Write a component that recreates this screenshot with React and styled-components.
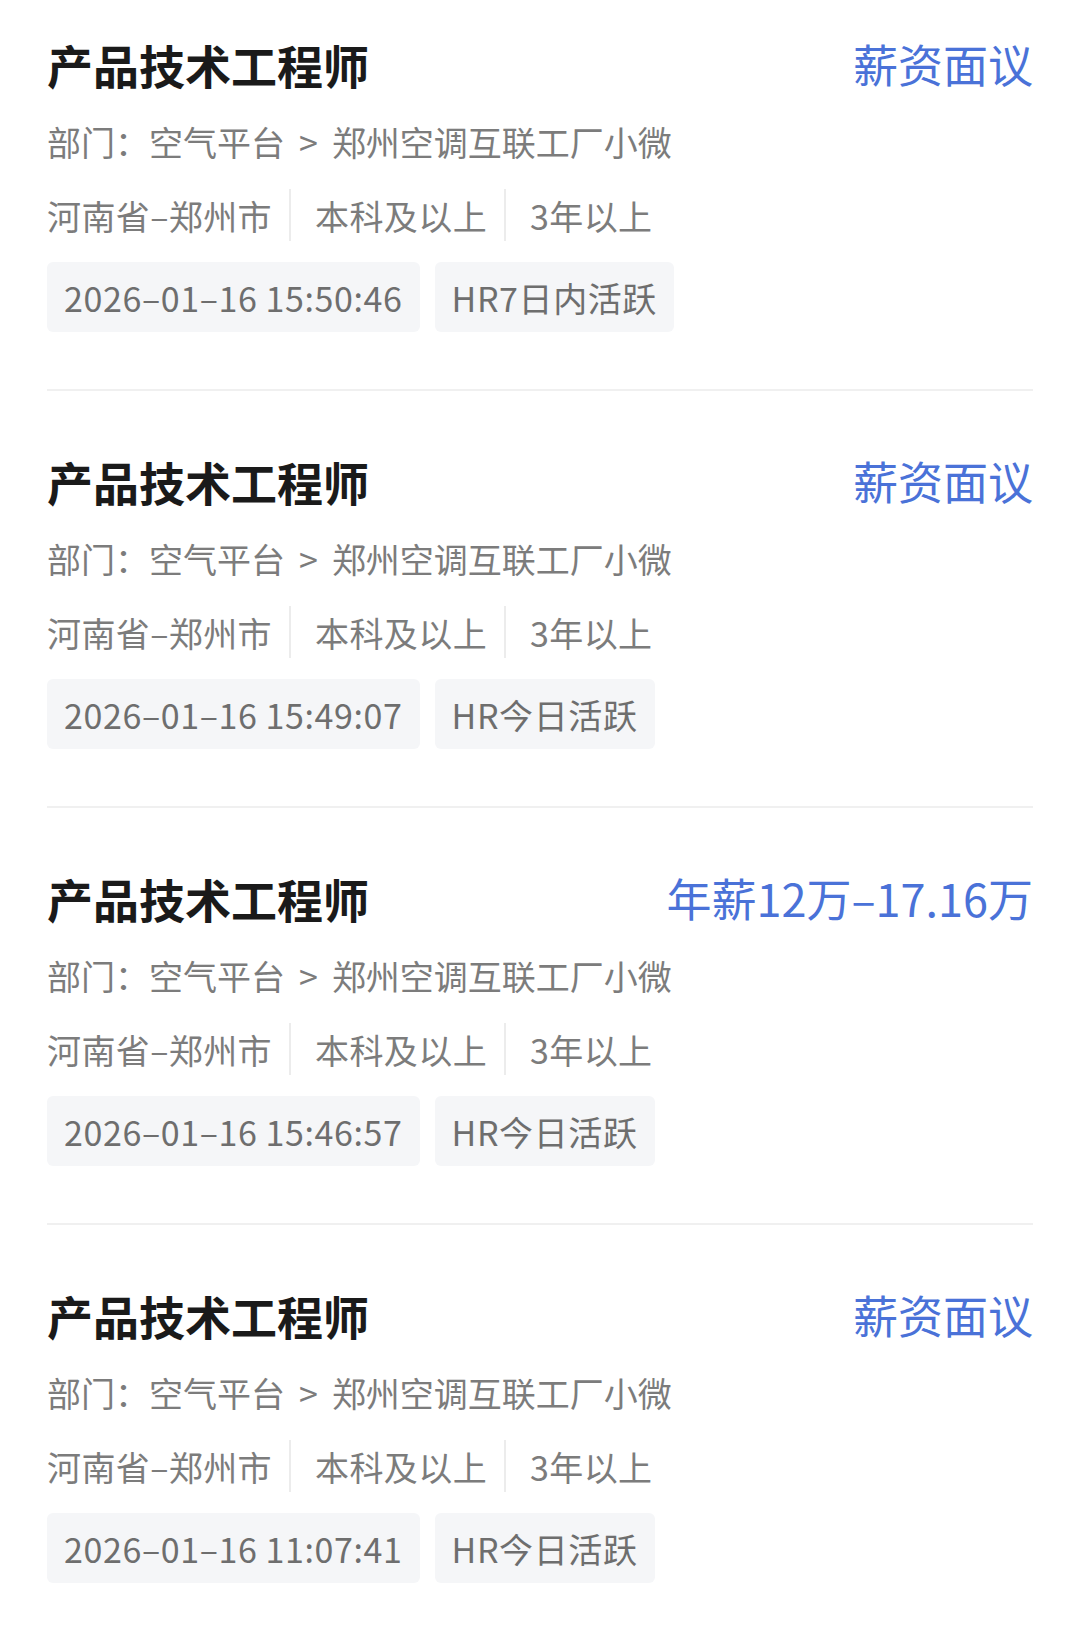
import React from 'react';
import styled, { createGlobalStyle } from 'styled-components';

const jobs = [
  { title: '产品技术工程师', salary: '薪资面议', time: '2026–01–16 15:50:46', active: 'HR7日内活跃' },
  { title: '产品技术工程师', salary: '薪资面议', time: '2026–01–16 15:49:07', active: 'HR今日活跃' },
  { title: '产品技术工程师', salary: '年薪12万–17.16万', time: '2026–01–16 15:46:57', active: 'HR今日活跃' },
  { title: '产品技术工程师', salary: '薪资面议', time: '2026–01–16 11:07:41', active: 'HR今日活跃' },
];

export default function App() {
  return (
    <>
      <GlobalStyle />
      <List>
        {jobs.map((job, i) => (
          <Card key={i}>
            <TitleRow>
              <Title>{job.title}</Title>
              <Salary>{job.salary}</Salary>
            </TitleRow>
            <Dept>
              部门：空气平台<Chevron>&gt;</Chevron>郑州空调互联工厂小微
            </Dept>
            <Meta>
              <span>河南省–郑州市</span>
              <Divider />
              <span>本科及以上</span>
              <Divider />
              <span>3年以上</span>
            </Meta>
            <Tags>
              <Tag>{job.time}</Tag>
              <Tag>{job.active}</Tag>
            </Tags>
          </Card>
        ))}
      </List>
    </>
  );
}

const GlobalStyle = createGlobalStyle`
  body {
    margin: 0;
    background: #fff;
    font-family: "Noto Sans CJK SC", "Noto Sans", sans-serif;
  }
`;

const List = styled.div`
  padding: 0 47px;
`;

const Card = styled.div`
  padding: 60px 0 57px;
  border-bottom: 2px solid #f0f0f0;

  &:first-child {
    padding-top: 34px;
  }
`;

const TitleRow = styled.div`
  display: flex;
  justify-content: space-between;
  align-items: center;
  height: 60px;
`;

const Title = styled.div`
  font-size: 46px;
  font-weight: 700;
  color: #1a1a1a;
  line-height: 60px;
`;

const Salary = styled.div`
  font-size: 45px;
  color: #4a72d8;
  line-height: 60px;
`;

const Dept = styled.div`
  margin-top: 24px;
  font-size: 34px;
  line-height: 48px;
  color: #7c7c7c;
`;

const Chevron = styled.span`
  margin: 0 14px;
`;

const Meta = styled.div`
  margin-top: 23px;
  display: flex;
  align-items: center;
  height: 52px;
  font-size: 34px;
  color: #7c7c7c;
  letter-spacing: 0.4px;
`;

const Divider = styled.i`
  width: 2px;
  height: 52px;
  background: #ececec;
  margin: 0 24px 0 17px;
`;

const Tags = styled.div`
  margin-top: 21px;
  display: flex;
  gap: 15px;
`;

const Tag = styled.div`
  display: flex;
  align-items: center;
  height: 70px;
  padding: 0 17px;
  border-radius: 6px;
  background: #f5f6f8;
  font-size: 34px;
  letter-spacing: 0.6px;
  color: #6e6e6e;
`;
